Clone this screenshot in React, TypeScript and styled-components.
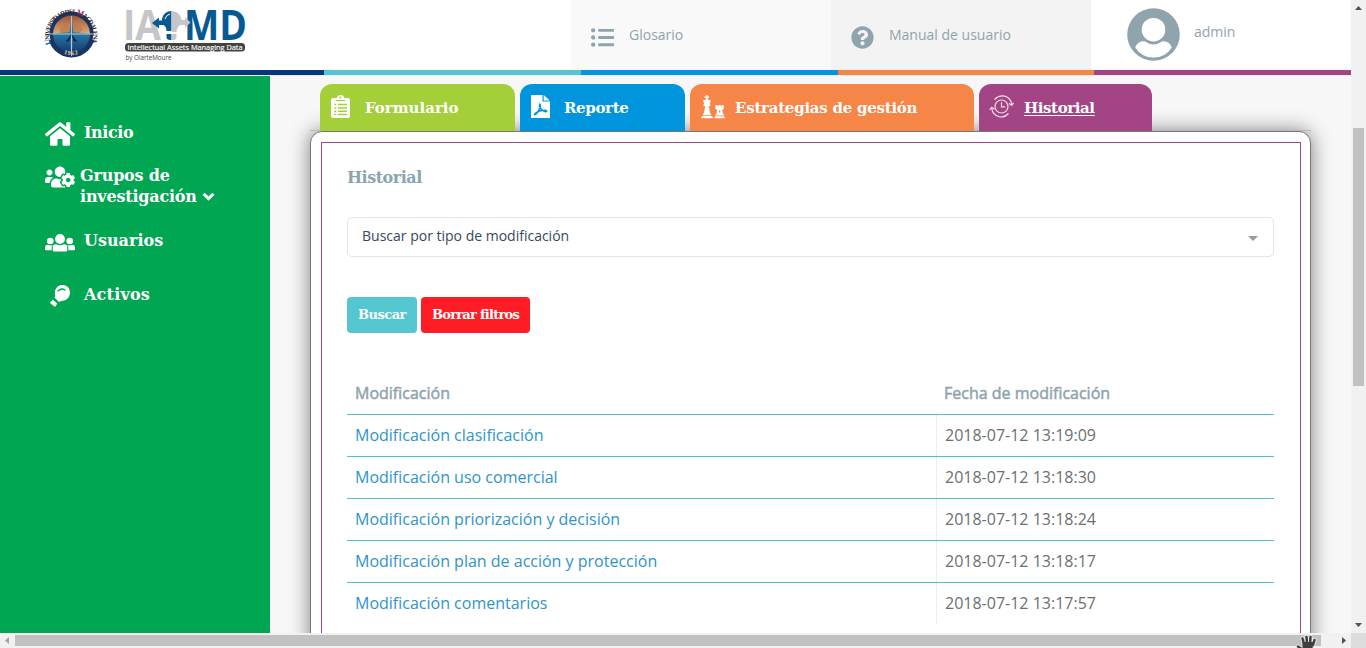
import React from 'react';
import styled, { createGlobalStyle } from 'styled-components';
import { FaHome, FaUsersCog, FaListUl, FaQuestionCircle } from 'react-icons/fa';

const slab = `'DejaVu Serif', serif`;

const GlobalStyle = createGlobalStyle`
  * { box-sizing: border-box; }
  body { margin: 0; overflow: hidden; font-family: 'Open Sans', sans-serif; background: #f7f7f7; }
`;

const Window = styled.div`
  display: grid;
  grid-template: 633px 15px / 1351px 15px;
  width: 1366px;
  height: 648px;
  overflow: hidden;
`;
const Page = styled.div`
  display: flex;
  flex-direction: column;
  overflow: hidden;
  background: #f7f7f7;
`;

/* Header */
const Header = styled.header`
  display: flex;
  flex: none;
  height: 70px;
  background: #fff;
`;
const Brand = styled.div`
  width: 571px;
  padding-left: 30px;
`;
const HeaderLink = styled.a<{ $bg: string }>`
  display: flex;
  width: 260px;
  padding-left: 20px;
  background: ${p => p.$bg};
  color: #90a4ae;
  font-size: 14px;
  line-height: 20px;
  svg { flex: none; margin-top: 26px; }
  span { margin: 25px 0 0 15px; }
`;
const User = styled.div`
  display: flex;
  padding-left: 36px;
  color: #90a4ae;
  font-size: 14px;
  line-height: 20px;
  svg { margin-top: 8px; }
  span { margin: 22px 0 0 14px; }
`;
const Stripe = styled.div`
  display: grid;
  flex: none;
  grid-template-columns: 324px 257px 257px 256px 257px;
  height: 6px;
  border-bottom: 1px solid #ececec;
`;
const Band = styled.i<{ $c: string }>`
  background: ${p => p.$c};
`;

/* Sidebar */
const Body = styled.div`
  display: flex;
  flex: 1;
  min-height: 0;
`;
const Sidebar = styled.nav`
  display: flex;
  flex: none;
  flex-direction: column;
  width: 270px;
  padding: 46px 0 0 45px;
  background: #00a651;
  color: #fff;
`;
const NavItem = styled.a<{ $h: number; $gap?: number; $top?: number; $ls?: number }>`
  display: flex;
  flex: none;
  height: ${p => p.$h}px;
  gap: ${p => p.$gap ?? 9}px;
  font: bold 16px/21px ${slab};
  letter-spacing: ${p => p.$ls ?? 0}px;
  white-space: nowrap;
  > svg { flex: none; margin-top: ${p => p.$top ?? 0}px; }
`;
const Second = styled.span`
  display: flex;
  align-items: center;
  gap: 5px;
`;

/* Content */
const Main = styled.main`
  display: flex;
  flex: 1;
  flex-direction: column;
  padding: 8px 40px 0 40px;
`;
const Tabs = styled.div`
  position: relative;
  z-index: 1;
  display: flex;
  flex: none;
  gap: 5px;
  width: 1001px;
  height: 47px;
  padding-left: 10px;
  background: linear-gradient(#bbb, #bbb) bottom / 100% 1px no-repeat;
`;
const Tab = styled.a<{ $w: number; $c: string; $gap: number; $ls: number; $active?: boolean }>`
  display: flex;
  width: ${p => p.$w}px;
  gap: ${p => p.$gap}px;
  padding: 10px 0 0 10px;
  border-radius: 12px 12px 0 0;
  background: ${p => p.$c};
  color: #fff;
  font: bold 15px/28px ${slab};
  letter-spacing: ${p => p.$ls}px;
  white-space: nowrap;
  svg { flex: none; }
  span { text-decoration: ${p => (p.$active ? 'underline' : 'none')}; text-underline-offset: 2px; text-decoration-thickness: 1px; text-decoration-skip-ink: none; }
`;
const Card = styled.section`
  flex: none;
  width: 1001px;
  height: 600px;
  padding: 10px 9px 0 10px;
  border: 1px solid #777;
  border-radius: 12px;
  background: #fff;
  box-shadow: 0 0 20px rgba(0, 0, 0, 0.5);
`;
const Panel = styled.div`
  height: 600px;
  padding: 24px 26px 0 25px;
  border: 1px solid #a34484;
`;
const Title = styled.h1`
  margin: 0;
  color: #8aa5b0;
  font: bold 16px/22px ${slab};
  letter-spacing: -0.5px;
`;
const Select = styled.div`
  display: flex;
  align-items: center;
  justify-content: space-between;
  height: 40px;
  margin-top: 28px;
  padding: 0 15px 3px 14px;
  border: 1px solid #e4e5e6;
  border-radius: 5px;
  color: #34495e;
  font-size: 14px;
`;
const Caret = styled.i`
  margin-top: 6px;
  border: 5px solid transparent;
  border-top-color: #999;
  border-bottom: 0;
`;
const Actions = styled.div`
  display: flex;
  gap: 4px;
  margin-top: 40px;
`;
const Button = styled.button<{ $c: string; $w: number; $ls: number }>`
  width: ${p => p.$w}px;
  height: 36px;
  padding: 0;
  border: 0;
  border-radius: 4px;
  background: ${p => p.$c};
  color: #fff;
  font: bold 13px/36px ${slab};
  letter-spacing: ${p => p.$ls}px;
  white-space: nowrap;
`;
const Table = styled.div`
  margin-top: 39px;
`;
const Row = styled.div`
  display: grid;
  grid-template-columns: 589px 1fr;
  height: 42px;
  border-top: 1px solid #53c2cd;
  font-size: 16px;
  line-height: 41px;
`;
const HeadRow = styled(Row)`
  border-top-color: transparent;
  color: #90a4ae;
  -webkit-text-stroke: 0.5px #90a4ae;
  span { padding-left: 8px; }
`;
const Name = styled.a`
  padding-left: 8px;
  color: #2e94cc;
`;
const Stamp = styled.span`
  padding-left: 8px;
  border-left: 1px dotted #ddd;
  color: #6a6f73;
`;

/* Scrollbars */
const VBar = styled.div`
  display: flex;
  flex-direction: column;
  align-items: center;
  padding-top: 6px;
  background: #f1f1f1;
`;
const VThumb = styled.div`
  flex: none;
  width: 11px;
  height: 258px;
  margin: 118px 0 237px;
  background: #c1c1c1;
`;
const HBar = styled.div`
  display: flex;
  align-items: center;
  padding-left: 5px;
  background: #f1f1f1;
`;
const HThumb = styled.div`
  flex: none;
  width: 1306px;
  height: 11px;
  margin: 0 21px 0 6px;
  background: #c1c1c1;
`;
const Corner = styled.div`
  background: #dcdcdc;
`;
const Arrow = styled.svg`
  flex: none;
  display: block;
`;
const Hand = styled.svg`
  position: absolute;
  left: 1296px;
  top: 634px;
`;

const Logos = () => (
  <svg width="230" height="70" viewBox="30 0 230 70">
    <defs>
      <path id="sealTop" d="M51.300 44 A21.700 21.700 0 1 1 92 42" />
      <path id="sealBottom" d="M54 47 A23 23 0 0 0 89 47" />
      <linearGradient id="earth" x1="0" y1="0" x2="0" y2="1">
        <stop offset="0" stopColor="#9d5736" />
        <stop offset="0.5" stopColor="#e0a878" />
        <stop offset="0.51" stopColor="#2477a8" />
        <stop offset="1" stopColor="#17396f" />
      </linearGradient>
    </defs>
    <circle cx="71.500" cy="34" r="23.500" fill="#183563" />
    <path d="M44 40 L46 6 H96 L98 40 L92.500 40 A22 22 0 1 0 50.500 40Z" fill="#fff" />
    <circle cx="71.500" cy="34.500" r="19.500" fill="#183563" />
    <circle cx="71.500" cy="34" r="18.500" fill="url(#earth)" />
    <path d="M60 27l6-3 5 4 5-5 7 6-4 5H60z" fill="#b97950" opacity=".7" />
    <path d="M71.500 15l1.800 17.200L93.500 34l-20.200 1.800L71.500 58l-1.800-22.200L48.500 34l21.200-1.800z" fill="#28749b" />
    <path d="M71.500 16v40M48.500 34h45" stroke="#d6e1de" strokeWidth=".8" />
    <path d="M71.500 34L65.500 42l4-1zM71.500 34l6 8-4-1z" fill="#132546" />
    <text fontFamily="Liberation Serif, serif" fontWeight="bold" fontSize="6.500" letterSpacing="-1" fill="#302734">
      <textPath href="#sealTop"><tspan fill="#2a55a0" fontSize="8">U</tspan>NIVERSIDAD DEL <tspan fill="#b02655" fontSize="8">M</tspan>AGDALENA</textPath>
    </text>
    <text fontFamily="Liberation Serif, serif" fontWeight="bold" fontSize="6" letterSpacing=".8" fill="#e6d5aa">
      <textPath href="#sealBottom" startOffset="12">1962</textPath>
    </text>
    <text x="123" y="40" fontFamily="Open Sans, sans-serif" fontWeight="bold" fontSize="42" fill="#c5c6c8" textLength="38" lengthAdjust="spacingAndGlyphs">IA</text>
    <text x="184" y="40" fontFamily="Open Sans, sans-serif" fontWeight="bold" fontSize="42" fill="#075a91" textLength="63" lengthAdjust="spacingAndGlyphs">MD</text>
    <path d="M171.500 11C166 11 162 15 162 20.500h-3V17.500l-7 5.500 7 5.500v-3.500h4.500q3 1.500 3 6h5z" fill="#075a91" />
    <path d="M171.500 11C177 11 181 15 181.500 20h3.500v-3l5.500 5.500-5.500 5.500v-3h-5q-3 2-3.500 7h-5z" fill="#c5c6c8" />
    <path d="M165 19q1-4 5-5" fill="none" stroke="#fff" />
    <path d="M166.500 34h5v6h-1.500q-3.500 0-3.500-3z" fill="#075a91" />
    <path d="M171.500 34h5v3q0 3-3.500 3h-1.500z" fill="#c5c6c8" />
    <rect x="125" y="43" width="120" height="8.500" rx="3.500" fill="#41433f" />
    <text x="127.500" y="50" fontFamily="Open Sans, sans-serif" fontSize="7.200" fill="#fff" stroke="#fff" strokeWidth=".15" textLength="115" lengthAdjust="spacingAndGlyphs">Intellectual Assets Managing Data</text>
    <text x="125.500" y="60" fontFamily="Open Sans, sans-serif" fontSize="6.500" fill="#444" textLength="46" lengthAdjust="spacingAndGlyphs">by OlarteMoure</text>
  </svg>
);

const AvatarIcon = () => (
  <svg width="53" height="53" viewBox="0 0 53 53">
    <circle cx="26.500" cy="26.500" r="26.300" fill="#90a4ae" />
    <circle cx="26.500" cy="21.700" r="11.800" fill="#fff" />
    <path d="M17.500 33.300Q26.500 39.500 35.500 33.300Q42 32.500 44.800 39.500Q38.500 49.500 26.500 49.500T8.200 39.500Q11 32.500 17.500 33.300z" fill="#fff" />
  </svg>
);
const PeopleIcon = () => (
  <svg width="30" height="20" viewBox="0 0 30 20" fill="#fff">
    <circle cx="15" cy="6" r="4.900" />
    <circle cx="5.300" cy="8" r="3.300" />
    <circle cx="24.700" cy="8" r="3.300" />
    <path d="M7.700 17.500v-3q0-3.300 3.300-3.300 4 2.200 8 0 3.300 0 3.300 3.300v3q0 1-1 1H8.700q-1 0-1-1z" />
    <path d="M2.500 11.800q3 1 5.200.3-1.100 1.200-1.100 2.400v2.700H1q-1 0-1-1v-2q0-2 2.500-2.400zM27.500 11.800q-3 1-5.200.3 1.100 1.200 1.100 2.400v2.700H29q1 0 1-1v-2q0-2-2.500-2.400z" />
  </svg>
);
const BulbIcon = () => (
  <svg width="30" height="24" viewBox="0 0 30 24">
    <path d="M17 1c5 0 8 3 8 7.500 0 5-4 8.500-9 8.500l-2 1-4.500-4.500.8-2C8.500 6 12.500 1 17 1z" fill="#fff" />
    <path d="M7.500 15.500l5 4.200-1.500 1.200.2 1.200-1.500.7-4.700-3.800.7-1.500 1-.3z" fill="#fff" />
    <path d="M13 7q3.500-3.500 7-1" fill="none" stroke="#00a651" strokeWidth="1.300" strokeLinecap="round" />
  </svg>
);
const ClipboardIcon = () => (
  <svg width="21" height="26" viewBox="0 0 21 26">
    <path d="M3 4h4q0-3 3.500-3T14 4h4q2 0 2 2v16q0 2-2 2H3q-2 0-2-2V6q0-2 2-2z" fill="#fff" />
    <circle cx="10.500" cy="3.600" r="1" fill="#a5cf38" />
    <path d="M6 6.500h9" stroke="#a5cf38" strokeWidth="1.200" />
    <path d="M8 10.500h9M8 14h9M8 17.300h9M8 20.500h9" stroke="#a5cf38" strokeWidth="1.400" />
    <path d="M4.300 10.500h2M4.300 14h2M4.300 17.300h2M4.300 20.500h2" stroke="#a5cf38" strokeWidth="1.700" />
  </svg>
);
const PdfIcon = () => (
  <svg width="21" height="26" viewBox="0 0 21 26">
    <path d="M1 1h11.500v6.500H20V24H1z" fill="#fff" />
    <path d="M13.700 1l6 5.500h-6z" fill="#fff" />
    <path d="M9.700 10c1.500 1 .5 4-1 6.500-1.300 2-2.700 4-4 4.200-.8-1 3-3.300 6-4 3-.7 6-.6 6 .6-.5 1.300-4-.5-5.500-2.300C10 13.500 9 11.500 9.700 10z" fill="none" stroke="#0095dc" strokeWidth="1.500" />
  </svg>
);
const ChessIcon = () => (
  <svg width="25" height="26" viewBox="0 0 25 26" fill="#fff">
    <path d="M6 1h1.500v1.500H9V4H7.500v1.200L11 6.500 9.500 10.500h1V12H9l1 7.500h1V21H3v-1.500h1L5 12H3.500v-1.500h1L3 6.500l3-1.300V4H4.500V2.500H6z" />
    <path d="M1.300 23.300q0-1.600 2-1.600h7.400q2 0 2 1.600v.9H1.300z" />
    <path d="M15.500 11h2v1.500h1V11h2.200v1.500h1V11h2v4l-1.500 1 .8 4.300h1v1.200h-8.500v-1.200h1l.6-4.300-1.600-1z" />
    <path d="M14.500 23.500q0-1.300 1.500-1.300h7q1.800 0 1.800 1.300v.7H14.500z" />
    <path d="M19 16.500h1.300v2H19z" fill="#f68548" />
  </svg>
);
const HistoryIcon = () => (
  <svg width="26" height="26" viewBox="0 0 26 26" fill="none" stroke="#f4dced" strokeWidth="1.200">
    <circle cx="12.500" cy="12.500" r="6.500" />
    <path d="M12.500 8.200v4.600h3.700" />
    <path d="M5.500 5.500Q10 1 15.500 2.200q6.500 1.800 7.200 8.300M20 9.500l2.800 2 1.700-2.600M19.500 19.500q-4 4.500-9.500 3.200-6.500-1.800-7.200-8.200M.7 15.800l2-2.600 2.800 2" />
  </svg>
);

const records = [
  ['Modificación clasificación', '2018-07-12 13:19:09'],
  ['Modificación uso comercial', '2018-07-12 13:18:30'],
  ['Modificación priorización y decisión', '2018-07-12 13:18:24'],
  ['Modificación plan de acción y protección', '2018-07-12 13:18:17'],
  ['Modificación comentarios', '2018-07-12 13:17:57'],
];

export default function App() {
  return (
    <>
      <GlobalStyle />
      <Window>
        <Page>
          <Header>
            <Brand><Logos /></Brand>
            <HeaderLink $bg="#f9f9f9"><FaListUl size={23} /><span>Glosario</span></HeaderLink>
            <HeaderLink $bg="#f3f3f3"><FaQuestionCircle size={23} /><span>Manual de usuario</span></HeaderLink>
            <User><AvatarIcon /><span>admin</span></User>
          </Header>
          <Stripe>
            {['#04377b', '#53c6d0', '#0095dc', '#f68548', '#a34484'].map(c => <Band key={c} $c={c} />)}
          </Stripe>
          <Body>
            <Sidebar>
              <NavItem $h={43} $ls={-0.4} $top={-3}><FaHome size={30} /><span>Inicio</span></NavItem>
              <NavItem $h={65} $gap={5} $ls={-0.2} $top={-3}>
                <FaUsersCog size={30} />
                <div>Grupos de
                  <Second>investigación
                    <svg width="13" height="9" viewBox="0 0 12 8"><path d="M1.500 1.500L6 6l4.500-4.500" fill="none" stroke="#fff" strokeWidth="2.800" /></svg>
                  </Second>
                </div>
              </NavItem>
              <NavItem $h={54} $top={3}><PeopleIcon /><span>Usuarios</span></NavItem>
              <NavItem $h={40} $ls={0.2}><BulbIcon /><span>Activos</span></NavItem>
            </Sidebar>
            <Main>
              <Tabs>
                <Tab $w={195} $c="#a5cf38" $gap={14} $ls={0}><ClipboardIcon /><span>Formulario</span></Tab>
                <Tab $w={165} $c="#0095dc" $gap={13} $ls={-0.35}><PdfIcon /><span>Reporte</span></Tab>
                <Tab $w={284} $c="#f68548" $gap={10} $ls={-0.25}><ChessIcon /><span>Estrategias de gestión</span></Tab>
                <Tab $w={173} $c="#a34484" $gap={9} $ls={-0.4} $active><HistoryIcon /><span>Historial</span></Tab>
              </Tabs>
              <Card>
                <Panel>
                  <Title>Historial</Title>
                  <Select><span>Buscar por tipo de modificación</span><Caret /></Select>
                  <Actions>
                    <Button $c="#53c6d0" $w={70} $ls={-0.5}>Buscar</Button>
                    <Button $c="#ff1d25" $w={109} $ls={-0.75}>Borrar filtros</Button>
                  </Actions>
                  <Table>
                    <HeadRow><span>Modificación</span><span>Fecha de modificación</span></HeadRow>
                    {records.map(([name, date]) => (
                      <Row key={date}><Name>{name}</Name><Stamp>{date}</Stamp></Row>
                    ))}
                  </Table>
                </Panel>
              </Card>
            </Main>
          </Body>
        </Page>
        <VBar>
          <Arrow width="7" height="4"><path d="M0 4L3.500 0 7 4z" fill="#505050" /></Arrow>
          <VThumb />
          <Arrow width="7" height="4"><path d="M0 0h7L3.500 4z" fill="#505050" /></Arrow>
        </VBar>
        <HBar>
          <Arrow width="4" height="7"><path d="M4 0v7L0 3.500z" fill="#a3a3a3" /></Arrow>
          <HThumb />
          <Arrow width="4" height="7"><path d="M0 0l4 3.500L0 7z" fill="#505050" /></Arrow>
        </HBar>
        <Corner />
      </Window>
      <Hand width="22" height="14" viewBox="0 0 22 14">
        <g fill="none" strokeLinecap="round">
          <path d="M2 12.500l3 2M6.500 4.500L8 10M10.500 3l.5 7M14.500 3L14 10M18.500 6L17 11M8 12h9" stroke="#e6e6e6" strokeWidth="4.400" />
          <path d="M2 12.500l3 2M6.500 4.500L8 10M10.500 3l.5 7M14.500 3L14 10M18.500 6L17 11" stroke="#404040" strokeWidth="2.500" />
        </g>
        <path d="M6.500 8h11l-1 6h-10z" fill="#404040" />
      </Hand>
    </>
  );
}
